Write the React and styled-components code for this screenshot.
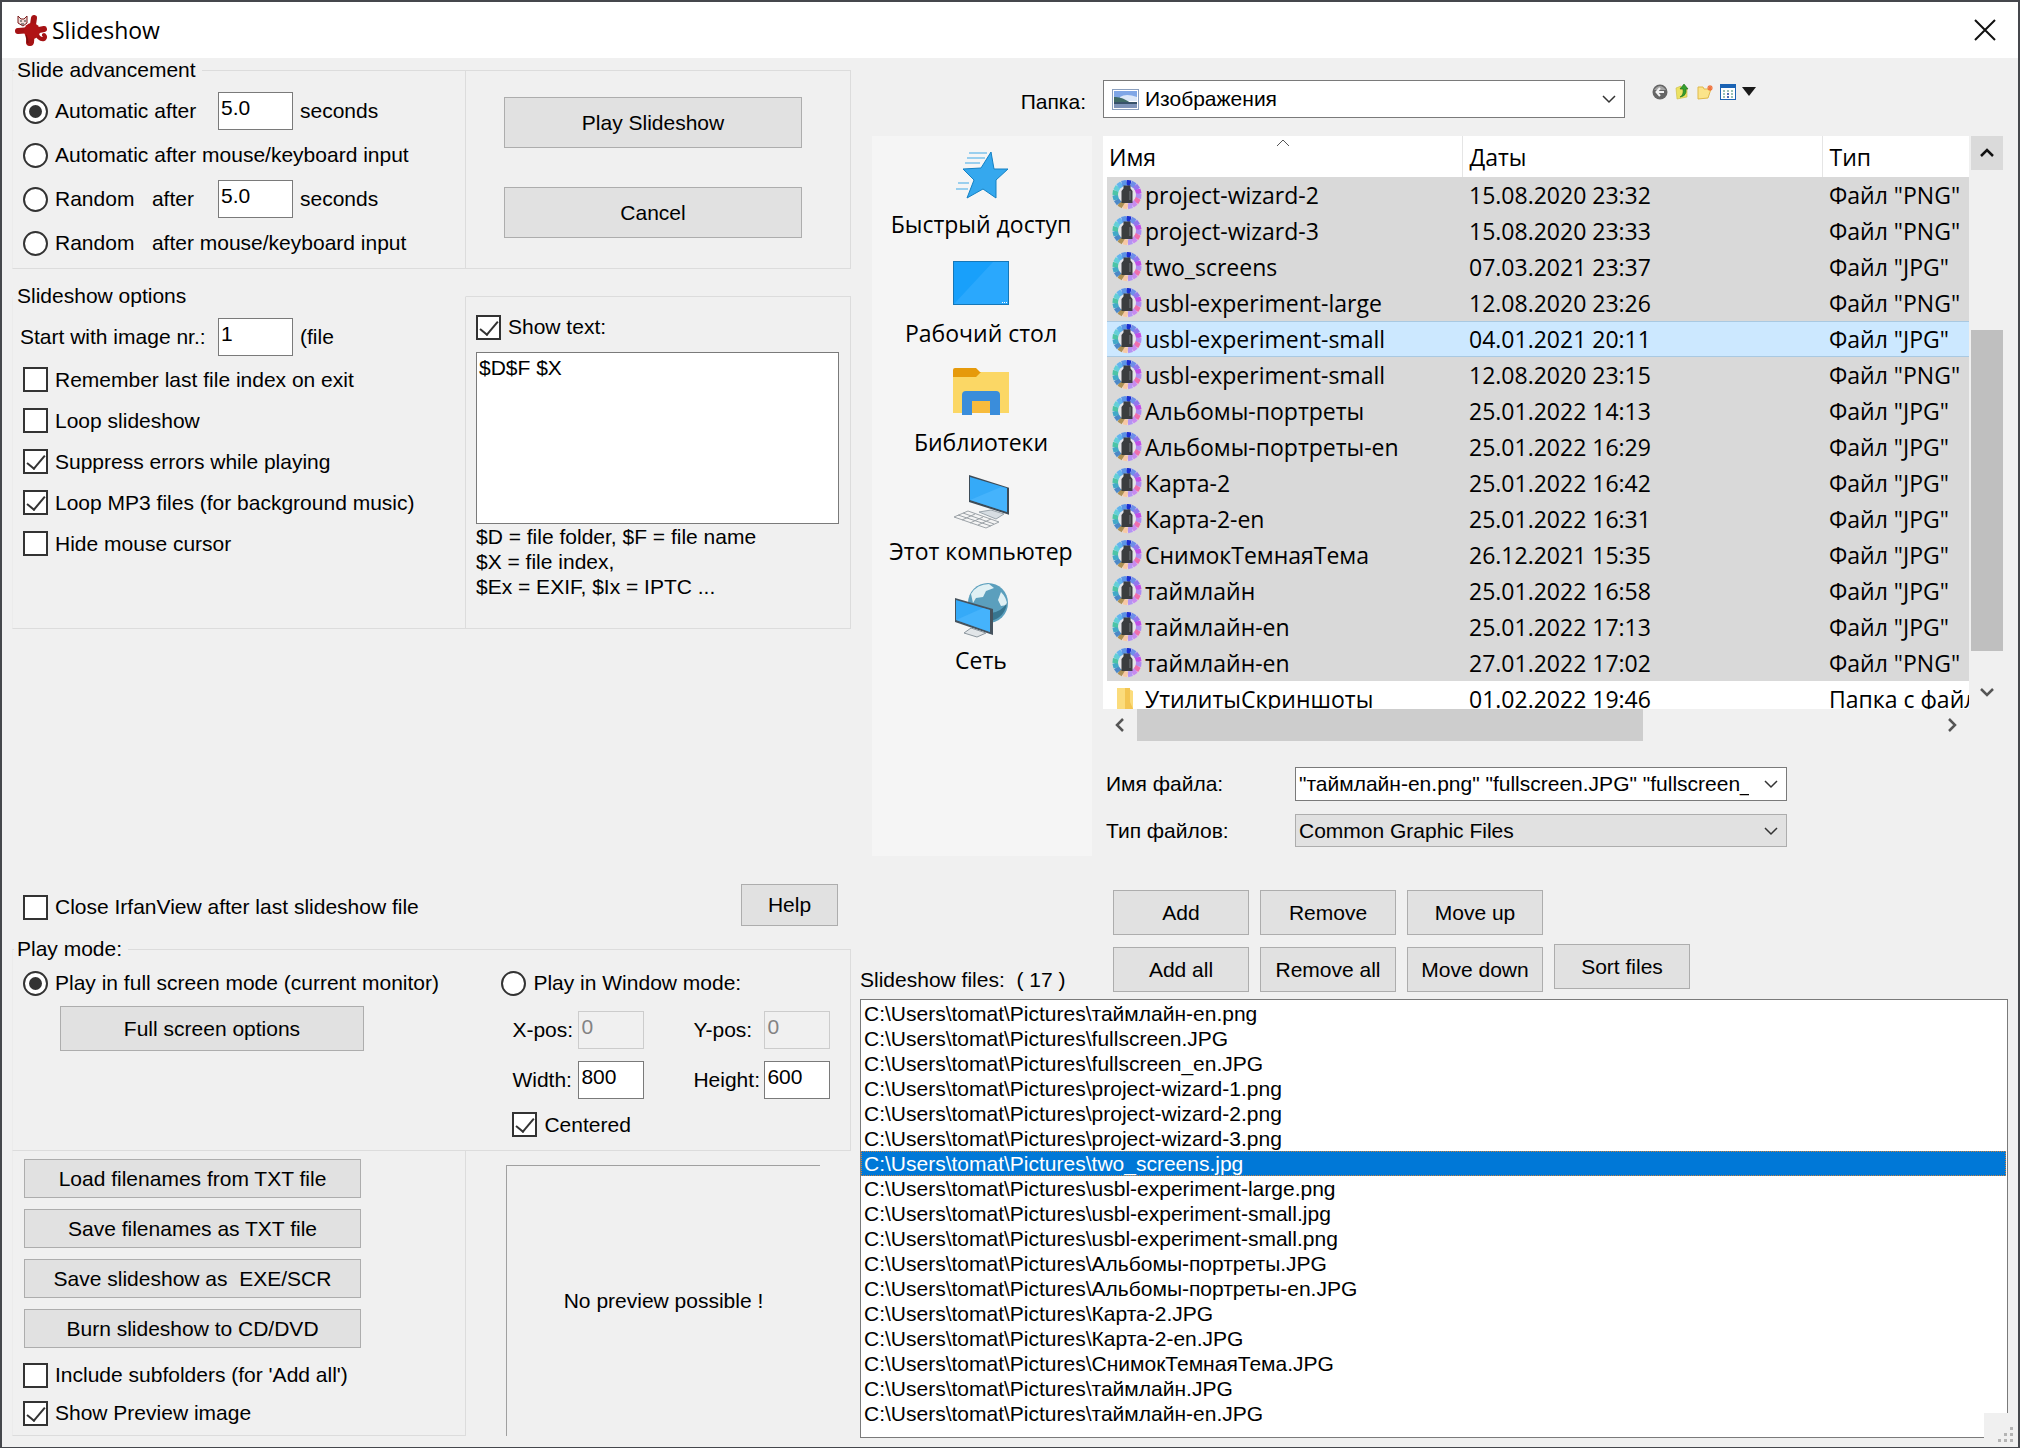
import React, { useState } from "react";
import styled, { createGlobalStyle, css } from "styled-components";

const ui = `"Liberation Sans", Arial, sans-serif`;
const shell = `"Open Sans", "Noto Sans", sans-serif`;

const GlobalStyle = createGlobalStyle`
  * { box-sizing: border-box; }
  body { margin: 0; background: #f0f0f0; }
  button, input, select, textarea { font: inherit; color: inherit; margin: 0; border-radius: 0; }
`;

/* ---------- window frame ---------- */

const Window = styled.div`
  position: relative;
  display: flex;
  flex-direction: column;
  min-height: 100vh;
  border: 2px solid #45474c;
  background: #f0f0f0;
  color: #000;
  font: 21px/24px ${ui};
`;

const TitleBar = styled.header`
  display: flex;
  align-items: center;
  height: 56px;
  padding: 0 16px 0 12px;
  background: #fff;
`;

const Title = styled.h1`
  flex: 1;
  margin: 0 0 0 4px;
  font: 400 23px/32px ${shell};
`;

const CloseButton = styled.button`
  display: flex;
  padding: 6px;
  border: 0;
  background: none;
`;

const Client = styled.main`
  flex: 1;
  display: grid;
  grid-template-columns: 849fr 1167fr;
`;

const Left = styled.div`
  display: flex;
  flex-direction: column;
  padding: 0 0 11px 10px;
`;

const Right = styled.div`
  display: flex;
  flex-direction: column;
  min-width: 0;
  padding: 22px 10px 9px 9px;
`;

/* ---------- generic controls ---------- */

const Button = styled.button`
  height: ${(p) => p.$h || 45}px;
  width: 100%;
  padding: 0;
  border: 1px solid #adadad;
  background: #e1e1e1;
  white-space: pre;
`;

const OptionLabel = styled.label`
  display: flex;
  align-items: center;
  gap: 7px;
  min-height: ${(p) => p.$h || 41}px;
  padding-left: ${(p) => (p.$flush ? 0 : 3)}px;
  white-space: pre;
`;

const mark = css`
  appearance: none;
  flex: none;
  display: grid;
  place-items: center;
  width: 25px;
  height: 25px;
  border: 2px solid #333;
  background: #fff;
`;

const Radio = styled.input.attrs({ type: "radio" })`
  ${mark}
  && { border-radius: 50%; }
  &:checked::after {
    content: "";
    width: 13px;
    height: 13px;
    border-radius: 50%;
    background: #333;
  }
`;

const Check = styled.input.attrs({ type: "checkbox" })`
  ${mark}
  &:checked::after {
    content: "";
    width: 8px;
    height: 16px;
    margin-bottom: 4px;
    border: solid #333;
    border-width: 0 2px 2px 0;
    transform: rotate(40deg);
  }
`;

const TextBox = styled.input.attrs({ type: "text" })`
  width: ${(p) => p.$w}px;
  height: 38px;
  padding: 0 2px 7px;
  border: 1px solid #7a7a7a;
  background: #fff;
  &:disabled {
    border-color: #ccc;
    background: #f0f0f0;
    color: #838383;
  }
`;

const line = "#dcdcdc";

const Group = styled.fieldset`
  min-width: 0;
  margin: 0;
  padding: ${(p) => p.$top || 0}px 0 0 7px;
  border: 1px solid ${line};
  border-left-color: #ebebeb;
  ${(p) => p.$noTop && "border-top-color: transparent;"}
`;

const Legend = styled.legend`
  margin-left: -6px;
  padding: 0 6px 0 3px;
  line-height: 24px;
`;

const SidePanel = styled.div`
  margin-top: 12px;
  padding: ${(p) => p.$pad};
  border: 1px solid ${line};
  border-left: 0;
`;

const Pair = styled.div`
  display: grid;
  grid-template-columns: 454fr 385fr;
  margin-bottom: ${(p) => p.$after || 0}px;
`;

const FieldRow = styled.div`
  display: grid;
  grid-template-columns: 198px 75px auto;
  align-items: center;
  min-height: 44px;
  white-space: pre;
`;

const Unit = styled.span`
  padding-left: 7px;
`;

const MainButtons = styled.div`
  display: grid;
  gap: 39px;
`;

const TextArea = styled.textarea`
  display: block;
  width: 100%;
  height: 172px;
  margin-top: 3px;
  padding: 3px 2px;
  border: 1px solid #7a7a7a;
  background: #fff;
  resize: none;
`;

const Help = styled.p`
  margin: 0;
  line-height: 25px;
  white-space: pre;
`;

const CloseRow = styled.div`
  display: flex;
  align-items: flex-start;
  justify-content: space-between;
  margin-top: auto;
  padding: 0 13px 7px 8px;
`;

const HelpSlot = styled.div`
  width: 97px;
`;

const PlayGrid = styled.div`
  display: grid;
  grid-template-columns: 479fr 352fr;
  padding-bottom: 5px;
`;

const FullScreenSlot = styled.div`
  width: 304px;
  margin: 1px 0 0 40px;
`;

const WindowMode = styled.div`
  padding: 6px 0 0 14px;
`;

const PosGrid = styled.div`
  display: grid;
  grid-template-columns: 66px 66px 49px 71px 66px;
  gap: 12px 0;
  align-items: center;
  label:nth-of-type(even) { grid-column: 4; }
`;

const CenteredRow = styled.div`
  margin-top: 5px;
`;

const ListActions = styled.div`
  padding: 8px 104px 3px 11px;
  border: 1px solid ${line};
  border-top: 0;
  border-left-color: #ebebeb;
`;

const ActionStack = styled.div`
  display: grid;
  gap: 11px;
  margin-bottom: 8px;
`;

const OptionStack = styled.div`
  margin-left: -4px;
`;

const PreviewFrame = styled.div`
  display: flex;
  align-items: center;
  justify-content: center;
  margin: 14px 31px 0 40px;
  border: solid #a0a0a0;
  border-width: 1px 0 0 1px;
`;

/* ---------- file dialog ---------- */

const FolderBar = styled.div`
  display: grid;
  grid-template-columns: 243px 522px 1fr;
  margin-bottom: 18px;
`;

const FolderLabel = styled.label`
  justify-self: end;
  padding: 10px 17px 0 0;
`;

const Combo = styled.div`
  display: flex;
  align-items: center;
  height: ${(p) => p.$h}px;
  padding: 0 8px 0 ${(p) => p.$left || 3}px;
  gap: ${(p) => p.$gap || 6}px;
  border: 1px solid ${(p) => (p.$flat ? "#adadad" : "#7a7a7a")};
  background: ${(p) => (p.$flat ? "#e1e1e1" : "#fff")};
`;

const comboText = css`
  flex: 1;
  min-width: 0;
  height: 100%;
  padding: 0;
  border: 0;
  background: none;
`;

const ComboSelect = styled.select`
  ${comboText}
  appearance: none;
`;

const ComboInput = styled.input.attrs({ type: "text" })`
  ${comboText}
`;

const ToolBar = styled.div`
  display: flex;
  align-items: center;
  align-self: start;
  gap: 6px;
  padding: 3px 0 0 27px;
`;

const ToolButton = styled.button`
  display: flex;
  padding: 0;
  border: 0;
  background: none;
`;

const Browser = styled.div`
  display: grid;
  grid-template-columns: 220px minmax(0, 1fr);
  gap: 11px;
  padding: 0 5px 0 12px;
`;

const Places = styled.nav`
  display: flex;
  flex-direction: column;
  gap: 16px;
  padding: 10px 2px 0 0;
  background: #f5f5f5;
`;

const Place = styled.button`
  display: flex;
  flex-direction: column;
  align-items: center;
  gap: 7px;
  padding: 0;
  border: 0;
  background: none;
  font: 23px/30px ${shell};
`;

const Files = styled.div`
  display: grid;
  grid-template-columns: minmax(0, 1fr) 32px;
  column-gap: 2px;
`;

const ListView = styled.div`
  height: 573px;
  padding-left: 4px;
  overflow: hidden;
  background: #fff;
`;

const Table = styled.table`
  width: 100%;
  table-layout: fixed;
  border-collapse: collapse;
  font: 23px/30px ${shell};
  th, td {
    overflow: hidden;
    padding: 0 0 0 7px;
    text-align: left;
    font-weight: 400;
    white-space: nowrap;
  }
`;

const Col = styled.col`
  width: ${(p) => p.$w};
`;

const HeadCell = styled.th`
  position: relative;
  height: 41px;
  border-right: 1px solid #e5e5e5;
  &:first-child { padding-left: 2px; }
  &:last-child { border-right: 0; }
`;

const SortMark = styled.svg`
  position: absolute;
  top: 3px;
  left: calc(50% - 8px);
`;

const Row = styled.tr`
  height: 36px;
  background: ${(p) => (p.$state === "focus" ? "#cce8ff" : p.$state === "plain" ? "#fff" : "#d9d9d9")};
  ${(p) => p.$state === "focus" && "box-shadow: inset 0 1px #a9c9e2, inset 0 -1px #a9c9e2;"}
`;

const NameCell = styled.div`
  display: flex;
  align-items: center;
  gap: 3px;
  margin-left: -2px;
  svg { flex: none; }
`;

const VBarWrap = styled.div`
  display: grid;
  grid-template-rows: 573px;
`;

const VBar = styled.div`
  display: grid;
  grid-template-rows: 34px 160fr 321fr 23fr 35px;
`;

const HBar = styled.div`
  display: grid;
  grid-template-columns: 34px 505fr 292fr 34px;
  height: 32px;
`;

const BarButton = styled.button`
  display: grid;
  place-items: center;
  padding: 0;
  border: 0;
  background: ${(p) => (p.$lit ? "#dadada" : "none")};
`;

const Thumb = styled.div`
  background: ${(p) => p.$bg};
`;

const FileFields = styled.div`
  display: grid;
  grid-template-columns: 189px 492px;
  align-items: center;
  gap: 13px 0;
  padding: 26px 0 9px 3px;
`;

/* ---------- slideshow list ---------- */

const ListHeader = styled.div`
  display: grid;
  grid-template-columns: 242px 136px 136px 136px 136px;
  gap: 12px 11px;
  margin: 34px 0 7px;
`;

const ListCaption = styled.h2`
  grid-area: 2 / 1;
  align-self: end;
  margin: 0;
  font: inherit;
  white-space: pre;
`;

const SortSlot = styled.div`
  margin-top: -3px;
`;

const FileList = styled.ul`
  flex: 1;
  margin: 0;
  padding: 1px 0 11px;
  border: 1px solid #7a7a7a;
  background: #fff;
  list-style: none;
`;

const FileItem = styled.li`
  padding: 0 3px;
  margin-right: 1px;
  line-height: 25px;
  ${(p) => p.$on && css`
    background: #0078d7;
    color: #fff;
    outline: 1px dotted #c98340;
    outline-offset: -1px;
  `}
`;

const Grip = styled.div`
  position: absolute;
  right: 0;
  bottom: 0;
  display: grid;
  place-items: end;
  width: 34px;
  height: 34px;
  padding: 4px;
  background: #f0f0f0;
`;

/* ---------- drawings ---------- */

const Chevron = ({ dir = "down", size = 14, weight = 1.5, color = "#333" }) => {
  const turn = { down: 0, left: 90, up: 180, right: 270 }[dir];
  return (
    <svg width={size} height={size} viewBox="0 0 14 14" fill="none" stroke={color} strokeWidth={weight} aria-hidden="true">
      <path d="M1 4l6 6 6-6" transform={`rotate(${turn} 7 7)`} />
    </svg>
  );
};

const Logo = () => (
  <svg width="34" height="34" viewBox="0 0 34 34" aria-hidden="true">
    <g stroke="#a51214" strokeLinecap="round" fill="none">
      <path d="M18 18L20 5" strokeWidth="6" />
      <path d="M17 17L4 18" strokeWidth="6" />
      <path d="M17 18L16 29" strokeWidth="8" />
      <path d="M20 18L30 16" strokeWidth="6" />
      <path d="M22 20q3 7 8 6q2-2 0-4" strokeWidth="4" />
    </g>
    <circle cx="18" cy="18" r="8" fill="#b01315" />
    <path d="M4 3l3 3h3l3-3v7l-4 3-5-3z" fill="#f0dcd8" stroke="#7a1a1a" strokeWidth="1" />
    <path d="M6 8h2M10 8h2M7 11h3" stroke="#333" />
    <path d="M12 22l2 8" stroke="#7d0b0d" strokeWidth="1.5" />
  </svg>
);

const wheel = ["#1b2fd0", "#6f8ee8", "#9277ec", "#c14fe6", "#b08bf0", "#ee6fae", "#c78bee", "#b394f2",
  "#f7c9a4", "#ac9054", "#4b88c6", "#42a9c8", "#4cc4a6", "#63cfd8", "#62b4ec", "#5c94e6"];

const WheelIcon = () => (
  <svg width="30" height="30" viewBox="0 0 30 30" aria-hidden="true">
    <circle cx="15" cy="14.500" r="14.500" fill="#ebe8f0" />
    {wheel.map((c, i) => (
      <rect key={i} x="12.600" y="0" width="4.800" height="6" fill={c} transform={`rotate(${i * 22.5 + 8} 15 14.5)`} />
    ))}
    <circle cx="15" cy="14.500" r="9" fill="#e4e4e8" />
    <path d="M11.500 5.500h7v3l2 2.500v12h-11v-12l2-2.500z" fill="#3b3d3f" />
    <path d="M17 11h2v9h-2z" fill="#595c5f" />
  </svg>
);

const FolderIcon = () => (
  <svg width="30" height="28" viewBox="0 0 30 28" aria-hidden="true">
    <path d="M5 3h10l6 3v20H5z" fill="#fbdc7c" />
    <path d="M13 3h5v14l4 9h-9z" fill="#f3c552" />
  </svg>
);

const PictureIcon = () => (
  <svg width="27" height="21" viewBox="0 0 27 21" aria-hidden="true">
    <rect x="0.5" y="0.5" width="26" height="20" fill="#fff" stroke="#8a9fbe" />
    <rect x="2" y="2" width="23" height="9" fill="#7fa6e6" />
    <path d="M8 8q6-4 17 0v4H8z" fill="#dbe7f8" />
    <path d="M2 8q7-1 17 6H2z" fill="#3f6a66" />
    <rect x="2" y="14" width="23" height="5" fill="#7e93b8" />
    <path d="M2 13h23v2H2z" fill="#37526a" />
  </svg>
);

const StarIcon = () => (
  <svg width="56" height="56" viewBox="0 0 56 56" aria-hidden="true">
    <path d="M38 6l3 17h14L43 34l0 18-13-9-16 9 7-18L10 23l18-1z" fill="#35a8ee" stroke="#1481c4" />
    <path d="M16 7h18M14 12h18M12 17h15M5 37h11M3 43h12" stroke="#7cc2ec" strokeWidth="1.4" />
  </svg>
);

const DesktopIcon = () => (
  <svg width="56" height="56" viewBox="0 0 56 56" aria-hidden="true">
    <rect x="0.5" y="6.5" width="55" height="43" fill="#18a0fb" stroke="#1577b8" />
    <path d="M1 49L40 7h15v42z" fill="#3cb0ff" opacity=".5" />
    <path d="M49 47.500h6" stroke="#fff" strokeDasharray="1 1" />
  </svg>
);

const LibraryIcon = () => (
  <svg width="56" height="56" viewBox="0 0 56 56" aria-hidden="true">
    <path d="M0 6q0-2 2-2h21l4 4h29v9H0z" fill="#e69a0b" />
    <path d="M0 13h23l5-5h28v41H0z" fill="#fbd765" />
    <path d="M19 37h18v12H19z" fill="#f7bb3c" />
    <path d="M9 51V31q0-4 4-4h30q4 0 4 4v20H37V37H19v14z" fill="#3a8ddb" />
  </svg>
);

const ComputerIcon = () => (
  <svg width="56" height="56" viewBox="0 0 56 56" aria-hidden="true">
    <path d="M16 2l41 13v27L16 29z" fill="#3d4b57" />
    <path d="M17 4l37 11v24L17 27z" fill="#35aaf8" />
    <path d="M17 27L48 14l6 2v23z" fill="#56bbff" opacity=".5" />
    <path d="M26 39l12-2 13 4-8 5z" fill="#d7dde2" stroke="#9aa4ac" />
    <path d="M1 44l14-6 31 11-13 6z" fill="#f4f4f4" stroke="#9da3a8" />
    <path d="M5 42l33 11M10 40l31 11M9 47l13-6M17 50l13-6M25 52l13-6" stroke="#9da3a8" strokeWidth="1" />
  </svg>
);

const NetworkIcon = () => (
  <svg width="56" height="56" viewBox="0 0 56 56" aria-hidden="true">
    <circle cx="35" cy="21" r="20" fill="#5b9fbd" />
    <path d="M18 12q6-10 18-10l5 4-8 3-3 6-7 1-3 5zM48 10q6 6 6 13l-6 1-3-6z" fill="#e0f0f4" />
    <path d="M38 39q14-4 16-18-6 9-16 10z" fill="#37758f" />
    <path d="M2 16l38 11v26L2 40z" fill="#46535e" />
    <path d="M3 18l34 10v22L3 38z" fill="#35aaf8" />
    <path d="M3 38L30 26l7 2v22z" fill="#56bbff" opacity=".5" />
    <path d="M11 51l7-5 15 5-9 4z" fill="#e1e5e8" stroke="#8c969e" />
  </svg>
);

const BackIcon = () => (
  <svg width="16" height="16" viewBox="0 0 16 16" aria-hidden="true">
    <circle cx="8" cy="8" r="7.500" fill="#666" />
    <path d="M2 6q6-8 12 0z" fill="#a5a5a5" />
    <path d="M8 4L4.500 8 8 12M5 8h7" stroke="#f2f2f2" strokeWidth="2" fill="none" />
  </svg>
);
const UpIcon = () => (
  <svg width="17" height="17" viewBox="0 0 17 17" aria-hidden="true">
    <path d="M2 5l5-2v3l6-1v9L3 16z" fill="#ece263" stroke="#c9bb3e" strokeWidth=".6" />
    <path d="M6 14q4-2 3-8H6l4-5 4 5h-2q1 7-6 8z" fill="#35a02e" stroke="#1d6b1a" strokeWidth=".6" />
  </svg>
);
const NewFolderIcon = () => (
  <svg width="17" height="16" viewBox="0 0 17 16" aria-hidden="true">
    <path d="M1 3h5l1 2h7l-3 9-10 1z" fill="#fbe48a" stroke="#dfb94a" />
    <path d="M13 1v6M10 4h6M11 2l4 4M15 2l-4 4" stroke="#f0733c" strokeWidth="1.200" />
  </svg>
);
const ViewIcon = () => (
  <svg width="16" height="16" viewBox="0 0 16 16" aria-hidden="true">
    <rect x=".5" y=".5" width="15" height="15" fill="#fff" stroke="#1b63b4" />
    <path d="M0 0h16v4H0z" fill="#1b63b4" />
    <path d="M3 7h2M7 7h2M11 7h2M3 10h2M11 10h2M3 13h2M11 13h2" stroke="#7ab0a0" strokeWidth="1.500" />
    <path d="M7 10h2M7 13h2" stroke="#1b3f9a" strokeWidth="1.500" />
  </svg>
);
const TriangleIcon = () => (
  <svg width="14" height="10" viewBox="0 0 14 10" aria-hidden="true"><path d="M0 0h14L7 9z" fill="#1a1a1a" /></svg>
);

/* ---------- data ---------- */

const places = [
  ["Быстрый доступ", StarIcon],
  ["Рабочий стол", DesktopIcon],
  ["Библиотеки", LibraryIcon],
  ["Этот компьютер", ComputerIcon],
  ["Сеть", NetworkIcon],
];

const tools = [
  ["Назад", BackIcon],
  ["Вверх", UpIcon],
  ["Новая папка", NewFolderIcon],
  ["Вид", ViewIcon],
  ["Меню вида", TriangleIcon],
];

const files = [
  ["project-wizard-2", "15.08.2020 23:32", 'Файл "PNG"'],
  ["project-wizard-3", "15.08.2020 23:33", 'Файл "PNG"'],
  ["two_screens", "07.03.2021 23:37", 'Файл "JPG"'],
  ["usbl-experiment-large", "12.08.2020 23:26", 'Файл "PNG"'],
  ["usbl-experiment-small", "04.01.2021 20:11", 'Файл "JPG"', "focus"],
  ["usbl-experiment-small", "12.08.2020 23:15", 'Файл "PNG"'],
  ["Альбомы-портреты", "25.01.2022 14:13", 'Файл "JPG"'],
  ["Альбомы-портреты-en", "25.01.2022 16:29", 'Файл "JPG"'],
  ["Карта-2", "25.01.2022 16:42", 'Файл "JPG"'],
  ["Карта-2-en", "25.01.2022 16:31", 'Файл "JPG"'],
  ["СнимокТемнаяТема", "26.12.2021 15:35", 'Файл "JPG"'],
  ["таймлайн", "25.01.2022 16:58", 'Файл "JPG"'],
  ["таймлайн-en", "25.01.2022 17:13", 'Файл "JPG"'],
  ["таймлайн-en", "27.01.2022 17:02", 'Файл "PNG"'],
  ["УтилитыСкриншоты", "01.02.2022 19:46", "Папка с файлами", "plain"],
];

const queue = [
  "таймлайн-en.png", "fullscreen.JPG", "fullscreen_en.JPG", "project-wizard-1.png",
  "project-wizard-2.png", "project-wizard-3.png", "two_screens.jpg",
  "usbl-experiment-large.png", "usbl-experiment-small.jpg", "usbl-experiment-small.png",
  "Альбомы-портреты.JPG", "Альбомы-портреты-en.JPG", "Карта-2.JPG", "Карта-2-en.JPG",
  "СнимокТемнаяТема.JPG", "таймлайн.JPG", "таймлайн-en.JPG",
];

/* ---------- composed parts ---------- */

const CheckOption = ({ children, on, h, flush }) => (
  <OptionLabel $h={h} $flush={flush}>
    <Check defaultChecked={on} />
    {children}
  </OptionLabel>
);

const RadioOption = ({ children, on, name, h = 44 }) => (
  <OptionLabel $h={h}>
    <Radio name={name} defaultChecked={on} />
    {children}
  </OptionLabel>
);

const Advancement = () => (
  <Pair $after={15}>
    <Group $top={7}>
      <Legend>Slide advancement</Legend>
      <FieldRow>
        <RadioOption name="advance" on>Automatic after</RadioOption>
        <TextBox $w={75} defaultValue="5.0" aria-label="Automatic delay" />
        <Unit>seconds</Unit>
      </FieldRow>
      <RadioOption name="advance">Automatic after mouse/keyboard input</RadioOption>
      <FieldRow>
        <RadioOption name="advance">{"Random   after"}</RadioOption>
        <TextBox $w={75} defaultValue="5.0" aria-label="Random delay" />
        <Unit>seconds</Unit>
      </FieldRow>
      <RadioOption name="advance">{"Random   after mouse/keyboard input"}</RadioOption>
    </Group>
    <SidePanel $pad="26px 48px 30px 38px">
      <MainButtons>
        <Button $h={51}>Play Slideshow</Button>
        <Button $h={51}>Cancel</Button>
      </MainButtons>
    </SidePanel>
  </Pair>
);

const Options = () => (
  <Pair>
    <Group $top={7} $noTop>
      <Legend>Slideshow options</Legend>
      <FieldRow>
        <label htmlFor="start">Start with image nr.:</label>
        <TextBox id="start" $w={75} defaultValue="1" />
        <Unit>(file</Unit>
      </FieldRow>
      <CheckOption>Remember last file index on exit</CheckOption>
      <CheckOption>Loop slideshow</CheckOption>
      <CheckOption on>Suppress errors while playing</CheckOption>
      <CheckOption on>Loop MP3 files (for background music)</CheckOption>
      <CheckOption>Hide mouse cursor</CheckOption>
    </Group>
    <SidePanel $pad="8px 11px 29px 10px">
      <CheckOption on flush h={44}>Show text:</CheckOption>
      <TextArea defaultValue="$D$F $X" aria-label="Slide text" />
      <Help>{"$D = file folder, $F = file name\n$X = file index,\n$Ex = EXIF, $Ix = IPTC ..."}</Help>
    </SidePanel>
  </Pair>
);

const PlayMode = () => (
  <Group>
    <Legend>Play mode:</Legend>
    <PlayGrid>
      <div>
        <RadioOption name="mode" on>Play in full screen mode (current monitor)</RadioOption>
        <FullScreenSlot><Button>Full screen options</Button></FullScreenSlot>
      </div>
      <div>
        <RadioOption name="mode">Play in Window mode:</RadioOption>
        <WindowMode>
          <PosGrid>
            <label htmlFor="xpos">X-pos:</label>
            <TextBox id="xpos" $w={66} defaultValue="0" disabled />
            <label htmlFor="ypos">Y-pos:</label>
            <TextBox id="ypos" $w={66} defaultValue="0" disabled />
            <label htmlFor="width">Width:</label>
            <TextBox id="width" $w={66} defaultValue="800" />
            <label htmlFor="height">Height:</label>
            <TextBox id="height" $w={66} defaultValue="600" />
          </PosGrid>
          <CenteredRow><CheckOption on flush>Centered</CheckOption></CenteredRow>
        </WindowMode>
      </div>
    </PlayGrid>
  </Group>
);

const Bottom = () => (
  <Pair>
    <ListActions>
      <ActionStack>
        <Button $h={39}>Load filenames from TXT file</Button>
        <Button $h={39}>Save filenames as TXT file</Button>
        <Button $h={39}>{"Save slideshow as  EXE/SCR"}</Button>
        <Button $h={39}>Burn slideshow to CD/DVD</Button>
      </ActionStack>
      <OptionStack>
        <CheckOption h={38}>Include subfolders (for 'Add all')</CheckOption>
        <CheckOption on h={38}>Show Preview image</CheckOption>
      </OptionStack>
    </ListActions>
    <PreviewFrame>No preview possible !</PreviewFrame>
  </Pair>
);

const VerticalBar = () => (
  <VBarWrap>
    <VBar>
      <BarButton $lit aria-label="Scroll up"><Chevron dir="up" weight={2.5} color="#111" /></BarButton>
      <span />
      <Thumb $bg="#bfbfbf" />
      <span />
      <BarButton aria-label="Scroll down"><Chevron weight={2.5} color="#555" /></BarButton>
    </VBar>
  </VBarWrap>
);

const FileBrowser = () => (
  <Browser>
    <Places>
      {places.map(([name, Icon]) => (
        <Place key={name}><Icon />{name}</Place>
      ))}
    </Places>
    <div>
      <Files>
        <div>
          <ListView>
            <Table>
              <colgroup>
                <Col $w="355px" />
                <Col $w="360px" />
                <Col $w="auto" />
              </colgroup>
              <thead>
                <tr>
                  <HeadCell>
                    Имя
                    <SortMark width="14" height="8" viewBox="0 0 14 8" fill="none" stroke="#555"><path d="M1 7l6-6 6 6" /></SortMark>
                  </HeadCell>
                  <HeadCell>Даты</HeadCell>
                  <HeadCell>Тип</HeadCell>
                </tr>
              </thead>
              <tbody>
                {files.map(([name, date, type, state], i) => (
                  <Row key={i} $state={state}>
                    <td><NameCell>{state === "plain" ? <FolderIcon /> : <WheelIcon />}{name}</NameCell></td>
                    <td>{date}</td>
                    <td>{type}</td>
                  </Row>
                ))}
              </tbody>
            </Table>
          </ListView>
          <HBar>
            <BarButton aria-label="Scroll left"><Chevron dir="left" weight={2.5} color="#555" /></BarButton>
            <Thumb $bg="#cdcdcd" />
            <span />
            <BarButton aria-label="Scroll right"><Chevron dir="right" weight={2.5} color="#555" /></BarButton>
          </HBar>
        </div>
        <VerticalBar />
      </Files>
      <FileFields>
        <label htmlFor="fname">Имя файла:</label>
        <Combo $h={34} $gap={15}>
          <ComboInput id="fname" defaultValue={'"таймлайн-en.png" "fullscreen.JPG" "fullscreen_en.JPG"'} />
          <Chevron />
        </Combo>
        <label htmlFor="ftype">Тип файлов:</label>
        <Combo $h={33} $flat>
          <ComboSelect id="ftype"><option>Common Graphic Files</option></ComboSelect>
          <Chevron />
        </Combo>
      </FileFields>
    </div>
  </Browser>
);

export default function App() {
  const [current, setCurrent] = useState(6);
  return (
    <>
      <GlobalStyle />
      <Window>
        <TitleBar>
          <Logo />
          <Title>Slideshow</Title>
          <CloseButton aria-label="Close">
            <svg width="22" height="22" viewBox="0 0 22 22" stroke="#111" strokeWidth="2"><path d="M1 1l20 20M21 1L1 21" /></svg>
          </CloseButton>
        </TitleBar>
        <Client>
          <Left>
            <Advancement />
            <Options />
            <CloseRow>
              <CheckOption h={46}>Close IrfanView after last slideshow file</CheckOption>
              <HelpSlot><Button $h={42}>Help</Button></HelpSlot>
            </CloseRow>
            <PlayMode />
            <Bottom />
          </Left>
          <Right>
            <FolderBar>
              <FolderLabel htmlFor="folder">Папка:</FolderLabel>
              <Combo $h={38} $left={8}>
                <PictureIcon />
                <ComboSelect id="folder"><option>Изображения</option></ComboSelect>
                <Chevron />
              </Combo>
              <ToolBar>
                {tools.map(([name, Icon]) => (
                  <ToolButton key={name} aria-label={name}><Icon /></ToolButton>
                ))}
              </ToolBar>
            </FolderBar>
            <FileBrowser />
            <ListHeader>
              <ListCaption>{"Slideshow files:  ( 17 )"}</ListCaption>
              <span />
              <Button>Add</Button>
              <Button>Remove</Button>
              <Button>Move up</Button>
              <span />
              <Button>Add all</Button>
              <Button>Remove all</Button>
              <Button>Move down</Button>
              <SortSlot><Button>Sort files</Button></SortSlot>
            </ListHeader>
            <FileList role="listbox" aria-label="Slideshow files">
              {queue.map((name, i) => (
                <FileItem key={name} role="option" aria-selected={i === current} $on={i === current} onClick={() => setCurrent(i)}>
                  {"C:\\Users\\tomat\\Pictures\\" + name}
                </FileItem>
              ))}
            </FileList>
          </Right>
        </Client>
        <Grip>
          <svg width="16" height="16" viewBox="0 0 16 16" fill="#b4b4b4" aria-hidden="true">
            <path d="M12 0h3v3h-3zM12 6h3v3h-3zM12 12h3v3h-3zM6 6h3v3h-3zM6 12h3v3h-3zM0 12h3v3h-3z" />
          </svg>
        </Grip>
      </Window>
    </>
  );
}
